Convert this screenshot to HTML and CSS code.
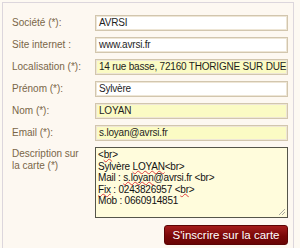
FILE: index.html
```html
<!DOCTYPE html>
<html lang="fr">
<head>
    <meta charset="UTF-8">
    <title>Inscription sur la carte</title>
    <link rel="stylesheet" href="styles.css">
</head>
<body>
    <div class="panel">
        <form class="signup-form">
            <label class="field-label">Société (*):</label>
            <div class="field-input">AVRSI</div>

            <label class="field-label">Site internet :</label>
            <div class="field-input">www.avrsi.fr</div>

            <label class="field-label">Localisation (*):</label>
            <div class="field-input filled">14 rue basse, 72160 THORIGNE SUR DUE</div>

            <label class="field-label">Prénom (*):</label>
            <div class="field-input">Sylvère</div>

            <label class="field-label">Nom (*):</label>
            <div class="field-input filled">LOYAN</div>

            <label class="field-label">Email (*):</label>
            <div class="field-input filled">s.loyan@avrsi.fr</div>

            <label class="field-label multi">Description sur<br>la carte (*)</label>
            <div class="field-text">
                <div>&lt;<span class="typo">br</span>&gt;</div>
                <div>Sylvère <span class="typo">LOYAN</span>&lt;br&gt;</div>
                <div>Mail : <span class="typo">s.loyan</span>@avrsi.fr &lt;br&gt;</div>
                <div><span class="typo">Fix</span> : 0243826957 &lt;<span class="typo">br</span>&gt;</div>
                <div>Mob : 0660914851</div>
                <svg class="grip" width="8" height="8" viewBox="0 0 8 8">
                    <path d="M7 1 L1 7 M7 4 L4 7" stroke="#a8a8a0" stroke-width="1" fill="none"/>
                </svg>
            </div>

            <div class="actions">
                <button type="button" class="submit-btn">S'inscrire sur la carte</button>
            </div>
        </form>
    </div>
</body>
</html>
```

FILE: styles.css
```css
body {
    margin: 0;
    background: #fdf9f2;
    font-family: Tahoma, "Liberation Sans", sans-serif;
}

.panel {
    margin: 2px 6px 0 2px;
    height: 246px;
    box-sizing: border-box;
    border: 1px solid #dcd6dc;
    border-bottom: none;
    background: #fdf8f1;
    padding: 12px 5px 0 9px;
}

.signup-form {
    display: grid;
    grid-template-columns: 83px 1fr;
    row-gap: 6px;
}

.field-label {
    font-family: "Liberation Sans", sans-serif;
    font-size: 10px;
    color: #7a6648;
    line-height: 16px;
}

.field-label.multi {
    line-height: 12px;
    padding-top: 1px;
}

.field-input {
    height: 16px;
    box-sizing: border-box;
    border: 1px solid #d2c6ae;
    box-shadow: inset 0 0 0 1px #eee6d6;
    background: #fff;
    padding: 0 3px;
    font-family: "Liberation Sans", sans-serif;
    font-size: 10px;
    letter-spacing: -0.2px;
    line-height: 14px;
    color: #1e1e1e;
    white-space: nowrap;
    overflow: hidden;
}

.field-input.filled {
    background: #fbfbc4;
}

.field-text {
    position: relative;
    height: 71px;
    box-sizing: border-box;
    border: 1px solid #55554a;
    background: #fffcdc;
    padding: 1px 2px;
    font-family: "Liberation Sans", sans-serif;
    font-size: 10px;
    letter-spacing: -0.2px;
    line-height: 11.5px;
    color: #111;
}

.typo {
    text-decoration: underline wavy #e04040;
    text-decoration-thickness: 1px;
    text-underline-offset: 0;
    text-decoration-skip-ink: none;
}

.grip {
    position: absolute;
    right: 1px;
    bottom: 1px;
}

.actions {
    grid-column: 2;
    display: flex;
    justify-content: flex-end;
    padding-top: 1px;
}

.submit-btn {
    width: 124px;
    height: 20px;
    border: 1px solid #5c0404;
    border-radius: 3px;
    background: linear-gradient(#a51c1c, #7a0808 55%, #690404);
    color: #fff;
    font-family: "Liberation Sans", sans-serif;
    font-size: 11.5px;
    padding: 0;
    cursor: pointer;
}
```
